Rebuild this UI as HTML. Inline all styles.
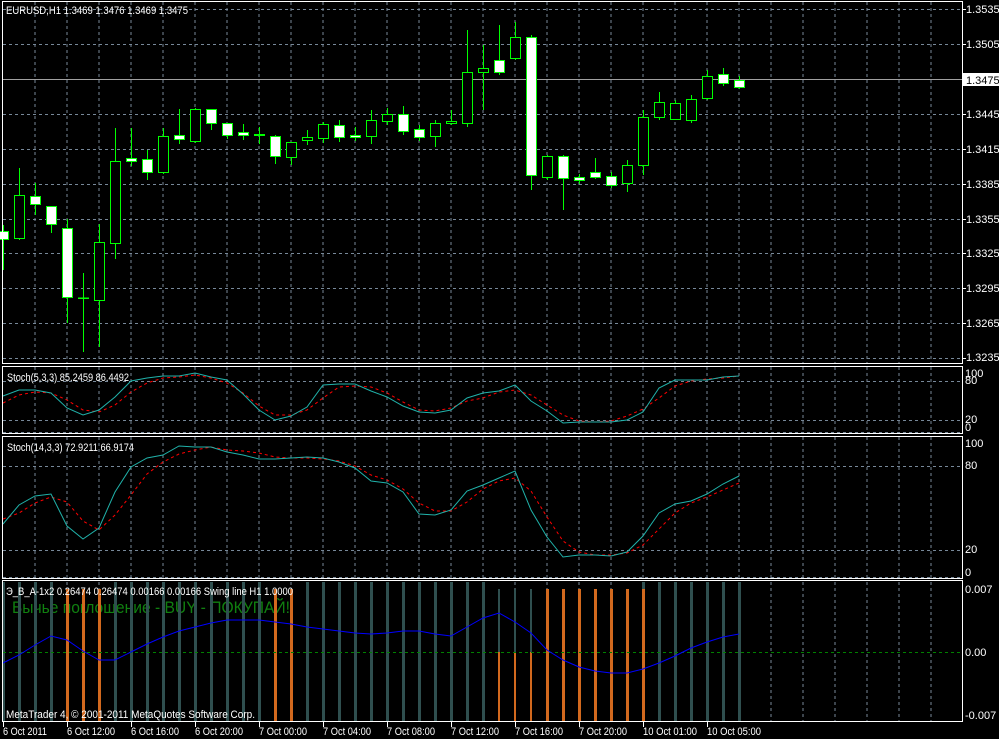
<!DOCTYPE html>
<html><head><meta charset="utf-8"><style>
html,body{margin:0;padding:0;background:#000;width:999px;height:739px;overflow:hidden}
svg{display:block}
text{font-family:"Liberation Sans","DejaVu Sans",sans-serif;font-size:11px;fill:#fff}
</style></head><body>
<svg width="999" height="739" viewBox="0 0 999 739" xmlns="http://www.w3.org/2000/svg">
<rect width="999" height="739" fill="#000"/>
<g stroke="#778899" stroke-width="1" stroke-dasharray="3,3" fill="none">
<path d="M35 2V364M67 2V364M99 2V364M131 2V364M163 2V364M195 2V364M227 2V364M259 2V364M291 2V364M323 2V364M355 2V364M387 2V364M419 2V364M451 2V364M483 2V364M515 2V364M547 2V364M579 2V364M611 2V364M643 2V364M675 2V364M707 2V364M739 2V364M771 2V364M803 2V364M835 2V364M867 2V364M899 2V364M931 2V364"/>
<path d="M3 9.5H962M3 44.5H962M3 114.5H962M3 149.5H962M3 184.5H962M3 219.5H962M3 253.5H962M3 288.5H962M3 323.5H962M3 358.5H962"/>
<path d="M35 367V434M67 367V434M99 367V434M131 367V434M163 367V434M195 367V434M227 367V434M259 367V434M291 367V434M323 367V434M355 367V434M387 367V434M419 367V434M451 367V434M483 367V434M515 367V434M547 367V434M579 367V434M611 367V434M643 367V434M675 367V434M707 367V434M739 367V434M771 367V434M803 367V434M835 367V434M867 367V434M899 367V434M931 367V434"/>
<path d="M3 381.5H962M3 420.5H962M3 432.5H962"/>
<path d="M35 437V578M67 437V578M99 437V578M131 437V578M163 437V578M195 437V578M227 437V578M259 437V578M291 437V578M323 437V578M355 437V578M387 437V578M419 437V578M451 437V578M483 437V578M515 437V578M547 437V578M579 437V578M611 437V578M643 437V578M675 437V578M707 437V578M739 437V578M771 437V578M803 437V578M835 437V578M867 437V578M899 437V578M931 437V578"/>
<path d="M3 466.5H962M3 550.5H962M3 577.5H962"/>
<path d="M35 582V721M67 582V721M99 582V721M131 582V721M163 582V721M195 582V721M227 582V721M259 582V721M291 582V721M323 582V721M355 582V721M387 582V721M419 582V721M451 582V721M483 582V721M515 582V721M547 582V721M579 582V721M611 582V721M643 582V721M675 582V721M707 582V721M739 582V721M771 582V721M803 582V721M835 582V721M867 582V721M899 582V721M931 582V721"/>
</g>
<line x1="3" y1="79.5" x2="962" y2="79.5" stroke="#a0a0a0"/>
<g stroke="#00ff00" stroke-width="1">
<path d="M3.5 225V270M19.5 168V240M35.5 183V215M51.5 206V233M67.5 219V323M83.5 273V352M99.5 224V347M115.5 128V259M131.5 128V166M147.5 150V180M163.5 128V174M179.5 109V144M195.5 108V143M211.5 109V130M227.5 123V139M243.5 124V140M259.5 127V144M275.5 135V164M291.5 142V165M307.5 130V145M323.5 122V143M339.5 120V142M355.5 127V141M371.5 110V144M387.5 108V125M403.5 106V135M419.5 125V141M435.5 120V147M451.5 110V125M467.5 30V127M483.5 45V110M499.5 25V75M515.5 22V60M531.5 35V190M547.5 155V180M563.5 155V210M579.5 174V184M595.5 158V179M611.5 172V188M627.5 160V192M643.5 110V175M659.5 92V120M675.5 100V120M691.5 95V123M707.5 70V100M723.5 68V86M739.5 76V89"/>
<g fill="#fff">
<rect x="-1.5" y="231.5" width="10" height="8"/>
<rect x="30.5" y="196.5" width="10" height="8"/>
<rect x="46.5" y="206.5" width="10" height="18"/>
<rect x="62.5" y="228.5" width="10" height="69"/>
<rect x="126.5" y="158.5" width="10" height="3"/>
<rect x="142.5" y="159.5" width="10" height="13"/>
<rect x="174.5" y="135.5" width="10" height="4"/>
<rect x="206.5" y="109.5" width="10" height="14"/>
<rect x="222.5" y="123.5" width="10" height="12"/>
<rect x="238.5" y="132.5" width="10" height="3"/>
<rect x="254.5" y="134.5" width="10" height="1"/>
<rect x="270.5" y="136.5" width="10" height="20"/>
<rect x="334.5" y="125.5" width="10" height="12"/>
<rect x="350.5" y="135.5" width="10" height="2"/>
<rect x="398.5" y="114.5" width="10" height="17"/>
<rect x="414.5" y="129.5" width="10" height="8"/>
<rect x="494.5" y="60.5" width="10" height="12"/>
<rect x="526.5" y="37.5" width="10" height="138"/>
<rect x="558.5" y="156.5" width="10" height="22"/>
<rect x="574.5" y="177.5" width="10" height="3"/>
<rect x="590.5" y="172.5" width="10" height="5"/>
<rect x="606.5" y="176.5" width="10" height="9"/>
<rect x="718.5" y="74.5" width="10" height="9"/>
<rect x="734.5" y="80.5" width="10" height="7"/>
</g>
<g fill="#000">
<rect x="14.5" y="195.5" width="10" height="43"/>
<rect x="78.5" y="298" width="10" height="0.5"/>
<rect x="94.5" y="242.5" width="10" height="58"/>
<rect x="110.5" y="161.5" width="10" height="82"/>
<rect x="158.5" y="136.5" width="10" height="36"/>
<rect x="190.5" y="109.5" width="10" height="32"/>
<rect x="286.5" y="142.5" width="10" height="15"/>
<rect x="302.5" y="137.5" width="10" height="3"/>
<rect x="318.5" y="124.5" width="10" height="14"/>
<rect x="366.5" y="120.5" width="10" height="16"/>
<rect x="382.5" y="114.5" width="10" height="7"/>
<rect x="430.5" y="123.5" width="10" height="13"/>
<rect x="446.5" y="121.5" width="10" height="2"/>
<rect x="462.5" y="72.5" width="10" height="51"/>
<rect x="478.5" y="68.5" width="10" height="4"/>
<rect x="510.5" y="37.5" width="10" height="21"/>
<rect x="542.5" y="156.5" width="10" height="21"/>
<rect x="622.5" y="165.5" width="10" height="18"/>
<rect x="638.5" y="117.5" width="10" height="48"/>
<rect x="654.5" y="102.5" width="10" height="15"/>
<rect x="670.5" y="103.5" width="10" height="16"/>
<rect x="686.5" y="99.5" width="10" height="21"/>
<rect x="702.5" y="76.5" width="10" height="22"/>
</g>
</g>
<polyline fill="none" stroke="#ff0000" stroke-dasharray="3,3" points="3,403 19,395 35,392 51,393 67,400 83,410 99,412 115,405 131,392 147,383 163,378 179,377 195,375 211,378 227,383 243,393 259,406 275,415 291,415 307,410 323,398 339,387 355,386 371,387 387,393 403,402 419,410 435,411 451,408 467,401 483,398 499,392 515,390 531,395 547,405 563,415 579,421 595,422 611,421 627,416 643,409 659,398 675,386 691,381 707,379 723,378 739,376"/>
<polyline fill="none" stroke="#20b2aa" points="3,396 19,390 35,390 51,393 67,408 83,415 99,410 115,397 131,381 147,378 163,376 179,376 195,373 211,377 227,380 243,394 259,410 275,420 291,416 307,407 323,385 339,384 355,384 371,391 387,397 403,406 419,412 435,413 451,410 467,398 483,393 499,391 515,385 531,401 547,411 563,423 579,422 595,422 611,422 627,420 643,412 659,388 675,380 691,380 707,380 723,377 739,376"/>
<polyline fill="none" stroke="#ff0000" stroke-dasharray="3,3" points="3,519 19,513 35,503 51,497 67,502 83,521 99,530 115,515 131,495 147,474 163,462 179,454 195,450 211,447 227,450 243,451 259,453 275,457 291,458 307,458 323,459 339,461 355,466 371,475 387,480 403,489 419,503 435,511 451,511 467,502 483,489 499,481 515,478 531,491 547,517 563,541 579,552 595,555 611,555 627,553 643,545 659,529 675,513 691,503 707,497 723,490 739,483"/>
<polyline fill="none" stroke="#20b2aa" points="3,524 19,505 35,496 51,494 67,526 83,539 99,528 115,492 131,467 147,458 163,455 179,446 195,447 211,447 227,452 243,455 259,459 275,459 291,458 307,457 323,458 339,462 355,468 371,481 387,483 403,492 419,514 435,515 451,510 467,491 483,485 499,478 515,471 531,510 547,537 563,557 579,555 595,555 611,556 627,552 643,536 659,513 675,504 691,501 707,494 723,484 739,476"/>
<text x="12" y="613" textLength="278" lengthAdjust="spacingAndGlyphs" style="font-size:17px;fill:#108010">Бычье поглощение - BUY - ПОКУПАЙ!</text>
<g fill="#2f4f4f">
<rect x="2" y="582" width="3" height="139"/><rect x="18" y="582" width="3" height="139"/><rect x="34" y="582" width="3" height="139"/><rect x="50" y="582" width="3" height="139"/>
<rect x="114" y="582" width="3" height="139"/><rect x="130" y="582" width="3" height="139"/><rect x="146" y="582" width="3" height="139"/><rect x="162" y="582" width="3" height="139"/><rect x="178" y="582" width="3" height="139"/><rect x="194" y="582" width="3" height="139"/><rect x="210" y="582" width="3" height="139"/><rect x="226" y="582" width="3" height="139"/><rect x="242" y="582" width="3" height="139"/><rect x="258" y="582" width="3" height="139"/>
<rect x="306" y="582" width="3" height="139"/><rect x="322" y="582" width="3" height="139"/><rect x="338" y="582" width="3" height="139"/><rect x="354" y="582" width="3" height="139"/><rect x="370" y="582" width="3" height="139"/><rect x="386" y="582" width="3" height="139"/><rect x="402" y="582" width="3" height="139"/><rect x="418" y="582" width="3" height="139"/><rect x="434" y="582" width="3" height="139"/><rect x="450" y="582" width="3" height="139"/><rect x="466" y="582" width="3" height="139"/><rect x="482" y="582" width="3" height="139"/>
<rect x="498" y="589" width="2" height="63"/><rect x="514" y="589" width="2" height="63"/><rect x="530" y="589" width="2" height="63"/>
<rect x="642" y="582" width="3" height="7"/>
<rect x="658" y="582" width="3" height="139"/><rect x="674" y="582" width="3" height="139"/><rect x="690" y="582" width="3" height="139"/><rect x="706" y="582" width="3" height="139"/><rect x="722" y="582" width="3" height="139"/><rect x="738" y="582" width="3" height="139"/>
</g>
<g fill="#d2691e">
<rect x="66" y="589" width="3" height="132"/><rect x="82" y="589" width="3" height="132"/><rect x="98" y="589" width="3" height="132"/><rect x="274" y="589" width="3" height="132"/><rect x="290" y="589" width="3" height="132"/>
<rect x="498" y="652" width="2" height="69"/><rect x="514" y="652" width="2" height="69"/><rect x="530" y="652" width="2" height="69"/>
<rect x="546" y="589" width="3" height="132"/><rect x="562" y="589" width="3" height="132"/><rect x="578" y="589" width="3" height="132"/><rect x="594" y="589" width="3" height="132"/><rect x="610" y="589" width="3" height="132"/><rect x="626" y="589" width="3" height="132"/><rect x="642" y="589" width="3" height="132"/>
</g>
<line x1="3" y1="652.5" x2="962" y2="652.5" stroke="#008000" stroke-dasharray="3,3"/>
<polyline fill="none" stroke="#0000ff" points="3,663 19,655 35,645 51,636 67,640 83,651 99,660 115,660 131,652 147,644 163,637 179,631 195,627 211,623 227,620 243,620 259,620 275,622 291,624 307,627 323,629 339,631 355,633 371,634 387,633 403,631 419,631 435,634 451,636 467,627 483,618 499,613 515,622 531,633 547,650 563,660 579,667 595,671 611,673 627,673 643,669 659,663 675,656 691,648 707,642 723,637 739,634"/>
<text x="6" y="595" textLength="287" lengthAdjust="spacingAndGlyphs">Э_В_А-1x2 0.26474 0.26474 0.00166 0.00166  Swing line H1 1.0000</text>
<text x="6" y="718" textLength="249" lengthAdjust="spacingAndGlyphs">MetaTrader 4, © 2001-2011 MetaQuotes Software Corp.</text>
<g fill="none" stroke="#fff" stroke-width="1">
<rect x="2.5" y="1.5" width="960" height="362"/>
<rect x="2.5" y="366.5" width="960" height="67"/>
<rect x="2.5" y="436.5" width="960" height="142"/>
<rect x="2.5" y="580.5" width="960" height="141"/>
<path d="M962 9.5h4M962 44.5h4M962 114.5h4M962 149.5h4M962 184.5h4M962 219.5h4M962 253.5h4M962 288.5h4M962 323.5h4M962 358.5h4"/>
<path d="M3.5 722v5M67.5 722v5M131.5 722v5M195.5 722v5M259.5 722v5M323.5 722v5M387.5 722v5M451.5 722v5M515.5 722v5M579.5 722v5M643.5 722v5M707.5 722v5"/>
</g>
<text x="6" y="14" textLength="182" lengthAdjust="spacingAndGlyphs">EURUSD,H1  1.3469 1.3476 1.3469 1.3475</text>
<text x="7" y="381" textLength="122" lengthAdjust="spacingAndGlyphs">Stoch(5,3,3) 85.2459 86.4492</text>
<text x="7" y="451" textLength="127" lengthAdjust="spacingAndGlyphs">Stoch(14,3,3) 72.9211 66.9174</text>
<g>
<text x="966" y="13">1.3535</text><text x="966" y="48">1.3505</text>
<rect x="963" y="73" width="36" height="13" fill="#fff"/><text x="966" y="84" style="fill:#000">1.3475</text>
<text x="966" y="118">1.3445</text><text x="966" y="153">1.3415</text><text x="966" y="188">1.3385</text><text x="966" y="223">1.3355</text><text x="966" y="257">1.3325</text><text x="966" y="292">1.3295</text><text x="966" y="327">1.3265</text><text x="966" y="361">1.3235</text>
<text x="965" y="377">100</text><text x="965" y="384">80</text><text x="965" y="423">20</text><text x="965" y="431">0</text>
<text x="965" y="447">100</text><text x="965" y="469">80</text><text x="965" y="553">20</text><text x="965" y="576">0</text>
<text x="965" y="593">0.007</text><text x="965" y="656">0.00</text><text x="965" y="719">-0.007</text>
</g>
<g>
<text x="3" y="735" textLength="44" lengthAdjust="spacingAndGlyphs">6 Oct 2011</text>
<text x="67" y="735" textLength="48" lengthAdjust="spacingAndGlyphs">6 Oct 12:00</text>
<text x="131" y="735" textLength="48" lengthAdjust="spacingAndGlyphs">6 Oct 16:00</text>
<text x="195" y="735" textLength="48" lengthAdjust="spacingAndGlyphs">6 Oct 20:00</text>
<text x="259" y="735" textLength="48" lengthAdjust="spacingAndGlyphs">7 Oct 00:00</text>
<text x="323" y="735" textLength="48" lengthAdjust="spacingAndGlyphs">7 Oct 04:00</text>
<text x="387" y="735" textLength="48" lengthAdjust="spacingAndGlyphs">7 Oct 08:00</text>
<text x="451" y="735" textLength="48" lengthAdjust="spacingAndGlyphs">7 Oct 12:00</text>
<text x="515" y="735" textLength="48" lengthAdjust="spacingAndGlyphs">7 Oct 16:00</text>
<text x="579" y="735" textLength="48" lengthAdjust="spacingAndGlyphs">7 Oct 20:00</text>
<text x="643" y="735" textLength="54" lengthAdjust="spacingAndGlyphs">10 Oct 01:00</text>
<text x="707" y="735" textLength="54" lengthAdjust="spacingAndGlyphs">10 Oct 05:00</text>
</g>
</svg>
</body></html>
